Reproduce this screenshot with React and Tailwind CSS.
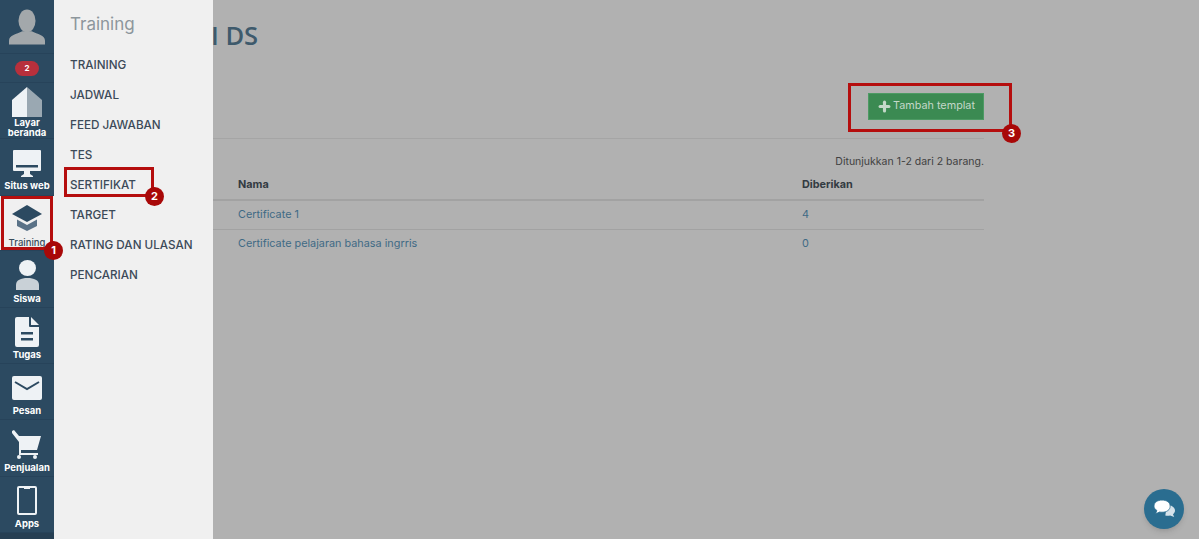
import { Plus } from "lucide-react";

const font = { fontFamily: "Inter, 'Noto Sans', sans-serif" };

const icons = {
  home: (
    <svg width="30" height="30" viewBox="0 0 30 30">
      <path d="M15 0 L0 13 V30 H15 Z" fill="#eef2f5" />
      <path d="M15 0 L30 13 V30 H15 Z" fill="#9aa8b2" />
    </svg>
  ),
  monitor: (
    <svg width="28" height="27" viewBox="0 0 28 27">
      <path d="M1 0 H27 a1 1 0 0 1 1 1 V20 a1 1 0 0 1 -1 1 H1 a1 1 0 0 1 -1 -1 V1 a1 1 0 0 1 1 -1 Z" fill="#eef2f5" />
      <rect x="3" y="15" width="22" height="2.5" fill="#2c4a61" />
      <path d="M11 21 H17 V24 L20 26 V27 H8 V26 L11 24 Z" fill="#eef2f5" />
    </svg>
  ),
  training: (
    <svg width="30" height="26" viewBox="0 0 30 26">
      <path d="M15 0 L30 9 L15 17 L0 9 Z" fill="#2c4a61" />
      <path d="M5 14.5 L15 20 L25 14.5 V21 L15 26 L5 21 Z" fill="#5a7287" />
    </svg>
  ),
  user: (
    <svg width="23" height="30" viewBox="0 0 23 30">
      <ellipse cx="11.5" cy="8" rx="8.5" ry="8" fill="#eef2f5" />
      <path d="M0 30 V25 C0 20 5 18 11.5 18 C18 18 23 20 23 25 V30 Z" fill="#c9d1d7" />
    </svg>
  ),
  file: (
    <svg width="24" height="30" viewBox="0 0 24 30">
      <path d="M2 0 H14 V9 a1 1 0 0 0 1 1 H24 V28 a2 2 0 0 1 -2 2 H2 a2 2 0 0 1 -2 -2 V2 a2 2 0 0 1 2 -2 Z" fill="#eef2f5" />
      <path d="M16 0 L24 8 H16 Z" fill="#eef2f5" />
      <rect x="6" y="15" width="12" height="2.5" fill="#2c4a61" />
      <rect x="6" y="21" width="12" height="2.5" fill="#2c4a61" />
    </svg>
  ),
  mail: (
    <svg width="30" height="24" viewBox="0 0 30 24">
      <rect width="30" height="24" rx="2" fill="#eef2f5" />
      <path d="M3 6 L15 13 L27 6" fill="none" stroke="#2c4a61" strokeWidth="2" />
    </svg>
  ),
  cart: (
    <svg width="30" height="30" viewBox="0 0 30 30">
      <path d="M0 1 L2 0 L7 6 H29 L25 20 H9 V23 H26 V25 H7 V12 L0 3 Z" fill="#eef2f5" />
      <circle cx="7" cy="27" r="2" fill="#eef2f5" />
      <circle cx="23" cy="27" r="2" fill="#eef2f5" />
    </svg>
  ),
  phone: (
    <svg width="20" height="29" viewBox="0 0 20 29">
      <rect x="1" y="1" width="18" height="27" rx="1" fill="none" stroke="#eef2f5" strokeWidth="2" />
      <rect x="7" y="1" width="6" height="2" fill="#eef2f5" />
    </svg>
  ),
};

const navItems = [
  { key: "home", label: "Layar beranda", box: "h-[56px] pt-[4px]", gap: "mb-[1px]" },
  { key: "monitor", label: "Situs web", box: "h-[57px] pt-[11px]", gap: "mb-[4px]" },
  { key: "training", label: "Training", box: "h-[55px] pt-[9px]", gap: "mb-[7px]", active: true },
  { key: "user", label: "Siswa", box: "h-[57px] pt-[9px]", gap: "mb-[4px]" },
  { key: "file", label: "Tugas", box: "h-[56px] pt-[9px]", gap: "mb-[3px]" },
  { key: "mail", label: "Pesan", box: "h-[56px] pt-[12px]", gap: "mb-[6px]" },
  { key: "cart", label: "Penjualan", box: "h-[57px] pt-[10px]", gap: "mb-[3px]" },
  { key: "phone", label: "Apps", box: "h-[56px] pt-[9px]", gap: "mb-[4px]" },
];

const menu = ["TRAINING", "JADWAL", "FEED JAWABAN", "TES", "SERTIFIKAT", "TARGET", "RATING DAN ULASAN", "PENCARIAN"];

const rows = [
  { name: "Certificate 1", given: "4" },
  { name: "Certificate pelajaran bahasa ingrris", given: "0" },
];

const Marker = ({ n, className }) => (
  <div className={`absolute w-[19px] h-[19px] rounded-full bg-[#a80808] text-white text-[11px] font-bold flex items-center justify-center ${className}`}>
    {n}
  </div>
);

export default function App() {
  return (
    <div className="relative w-[1199px] h-[539px] flex overflow-hidden bg-[#b1b1b1]" style={font}>
      {/* sidebar */}
      <aside className="w-[54px] shrink-0 bg-[#2c4a61] flex flex-col">
        <div className="h-[54px] flex items-center justify-center border-b border-[#27435a]">
          <svg width="36" height="36" viewBox="0 0 38 37">
            <ellipse cx="19" cy="12" rx="9" ry="12" fill="#a3a8ab" />
            <path d="M0 37 V33 C0 27 8 26 14 23 H24 C30 26 38 27 38 33 V37 Z" fill="#a3a8ab" />
          </svg>
        </div>
        <div className="h-[29px] flex items-center justify-center border-b border-[#27435a]">
          <span className="w-[24px] h-[15px] rounded-full bg-[#b8303c] text-white text-[8px] font-bold flex items-center justify-center">2</span>
        </div>
        {navItems.map((item) => (
          <div
            key={item.key}
            className={`${item.box} ${item.active ? "bg-[#f0f0f0] text-[#3a4c5a] font-medium" : "text-white font-bold"} flex flex-col items-center border-b border-[#27435a] text-[9.5px] leading-[10px] text-center`}
          >
            <div className={item.gap}>{icons[item.key]}</div>
            <span>{item.label}</span>
          </div>
        ))}
        <div className="flex-1 bg-[#263f53]" />
      </aside>

      {/* submenu */}
      <nav className="w-[159px] shrink-0 bg-[#f0f0f0] pl-[16px] pt-[12px]">
        <h2 className="text-[17px] leading-[24px] text-[#8d969c] mb-[15px]">Training</h2>
        <ul className="text-[11.7px] font-medium text-[#3c4a58]">
          {menu.map((m) => (
            <li key={m} className="h-[30px] flex items-center">{m}</li>
          ))}
        </ul>
      </nav>

      {/* content */}
      <main className="flex-1 pr-[215px] pt-[18px] text-[10.85px]">
        <h1 className="-ml-[2px] -mt-[1px] mb-[1px] text-[25.5px] leading-[36px] font-semibold text-[#3e5a6c]" style={{ fontFamily: "'Open Sans', sans-serif" }}>I DS</h1>
        <div className="h-[85px] pt-[39px] flex justify-end border-b border-[#a5a5a5]">
          <button className="w-[116px] h-[27px] bg-[#3b8a52] border border-[#4d9a64] text-[#c4d8c9] text-[10.8px] flex items-center justify-center gap-[1px]">
            <Plus size={15} strokeWidth={5} />
            Tambah templat
          </button>
        </div>
        <p className="h-[28px] pt-[15px] text-right leading-[16px] text-[10.5px] text-[#414141]">Ditunjukkan 1-2 dari 2 barang.</p>
        <div className="h-[34px] pt-[2px] grid grid-cols-[564px_1fr] items-center pl-[25px] border-b-2 border-[#a2a2a2] font-bold text-[#333b42]">
          <span>Nama</span>
          <span>Diberikan</span>
        </div>
        {rows.map((r) => (
          <div key={r.name} className="h-[29px] pb-[2px] grid grid-cols-[564px_1fr] items-center pl-[25px] border-b border-[#a2a2a2] text-[#3f6a85] last:border-b-0">
            <span>{r.name}</span>
            <span>{r.given}</span>
          </div>
        ))}
      </main>

      {/* chat bubble */}
      <div className="absolute left-[1144px] top-[489px] w-[40px] h-[40px] rounded-full bg-[#2a6d90] shadow-md flex items-center justify-center">
        <svg width="21" height="18" viewBox="0 0 26 22">
          <path d="M16 6 C22 6 26 9 26 13 C26 15 25 16.5 23.5 17.5 L25 21 L20 19 C18 19.5 16 19.5 14 19 Z" fill="#d5e2ea" />
          <path d="M10 0 C16 0 20 3 20 7.5 C20 12 16 15 10 15 C9 15 8 15 7 14.7 L2 17 L3.5 12.8 C1.5 11.5 0 9.7 0 7.5 C0 3 4 0 10 0 Z" fill="#ffffff" stroke="#2a6d90" />
        </svg>
      </div>

      {/* annotations */}
      <div className="absolute left-[1px] top-[196px] w-[52px] h-[54px] border-[3px] border-[#b50e0e]" />
      <Marker n="1" className="left-[44px] top-[241px]" />
      <div className="absolute left-[64px] top-[167px] w-[90px] h-[30px] border-[3px] border-[#b50e0e]" />
      <Marker n="2" className="left-[145px] top-[187px]" />
      <div className="absolute left-[848px] top-[83px] w-[164px] h-[49px] border-[3px] border-[#b50e0e]" />
      <Marker n="3" className="left-[1002px] top-[124px]" />
    </div>
  );
}
